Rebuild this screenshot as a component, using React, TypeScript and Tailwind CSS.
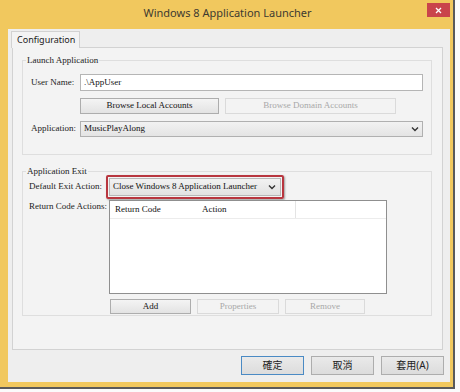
import React from "react";

const serif = { fontFamily: '"Liberation Serif", "Noto Sans CJK TC", serif' };
const sans = { fontFamily: '"Noto Sans", "Open Sans", sans-serif' };
const cjk = { fontFamily: '"Noto Sans", "Noto Sans CJK TC", sans-serif' };

function Chevron() {
  return (
    <svg width="8" height="6" viewBox="0 0 8 6" className="shrink-0">
      <path d="M1 1.5 L4 4.5 L7 1.5" fill="none" stroke="#333" strokeWidth="1.4" />
    </svg>
  );
}

function Btn({ children, disabled, w }: { children: React.ReactNode; disabled?: boolean; w: string }) {
  return (
    <div
      className={
        "h-full flex items-center justify-center border text-[9px] " +
        w +
        (disabled
          ? " border-[#dadada] bg-[#f3f3f3] text-[#a8a8a8]"
          : " border-[#adadad] bg-gradient-to-b from-[#f4f4f4] to-[#e3e3e3] text-[#111]")
      }
      style={serif}
    >
      {children}
    </div>
  );
}

export default function App() {
  return (
    <div className="w-[460px] h-[392px] bg-[#fbfbfb] overflow-hidden">
      <div className="w-[455px] h-[389px] bg-[#f1c85e] border-r-2 border-b-2 border-[#5a5a5a] flex flex-col">
        {/* Title bar */}
        <div className="h-[29px] relative flex items-center justify-center shrink-0">
          <span className="text-[11px] text-[#3e3a30] mt-[-3px] ml-[2px]" style={sans}>
            Windows 8 Application Launcher
          </span>
          <div className="absolute left-[427px] top-[3px] w-[23px] h-[14px] bg-[#c9444b] flex items-center justify-center">
            <svg width="7" height="7" viewBox="0 0 7 7">
              <path d="M1 1 L6 6 M6 1 L1 6" stroke="#fff" strokeWidth="1.3" />
            </svg>
          </div>
        </div>

        {/* Client area */}
        <div className="ml-[8px] w-[442px] h-[353px] bg-[#eeeeee] flex flex-col shrink-0">
          {/* Tab header */}
          <div className="h-[18px] relative shrink-0">
            <div
              className="absolute left-[3px] top-[2px] w-[69px] h-[17px] bg-[#f3f3f3] border border-b-0 border-[#d2d2d2] flex items-center pl-[5px] text-[9px] text-[#1a1a1a] z-10"
              style={sans}
            >
              Configuration
            </div>
          </div>
          {/* Tab page */}
          <div className="ml-[4px] w-[431px] h-[303px] border border-[#d2d2d2] bg-[#f3f3f3] pl-[9px] pt-[12px] flex flex-col shrink-0">
            {/* Launch Application group */}
            <div className="w-[410px] h-[95px] border border-[#dedede] flex flex-col pl-[8px] shrink-0">
              <div
                className="self-start -mt-[7px] -ml-[5px] px-[1px] h-[12px] bg-[#f3f3f3] text-[9px] leading-[12px] text-[#222] whitespace-nowrap"
                style={serif}
              >
                Launch Application
              </div>
              <div className="flex items-center h-[17px] mt-[8px]">
                <div className="w-[49px] text-[9px] text-[#222]" style={serif}>
                  User Name:
                </div>
                <div
                  className="w-[343px] h-full bg-white border border-[#b5b5b5] flex items-center pl-[3px] text-[9px] text-[#111]"
                  style={serif}
                >
                  .\AppUser
                </div>
              </div>
              <div className="flex h-[16px] mt-[7px] pl-[49px] gap-[6px]">
                <Btn w="w-[139px]">Browse Local Accounts</Btn>
                <Btn w="w-[171px]" disabled>
                  Browse Domain Accounts
                </Btn>
              </div>
              <div className="flex items-center h-[16px] mt-[7px]">
                <div className="w-[49px] text-[9px] text-[#222]" style={serif}>
                  Application:
                </div>
                <div
                  className="w-[343px] h-full bg-gradient-to-b from-[#f2f2f2] to-[#e4e4e4] border border-[#b0b0b0] flex items-center justify-between pl-[3px] pr-[3px] text-[9px] text-[#111]"
                  style={serif}
                >
                  <span>MusicPlayAlong</span>
                  <Chevron />
                </div>
              </div>
            </div>

            {/* Application Exit group */}
            <div className="w-[410px] h-[145px] mt-[16px] border border-[#dedede] flex flex-col pl-[6px] shrink-0">
              <div
                className="self-start -mt-[7px] -ml-[3px] px-[1px] h-[12px] bg-[#f3f3f3] text-[9px] leading-[12px] text-[#222] whitespace-nowrap"
                style={serif}
              >
                Application Exit
              </div>
              <div className="flex items-center h-[24px] -mt-[2px]">
                <div className="w-[77px] text-[9px] text-[#222]" style={serif}>
                  Default Exit Action:
                </div>
                <div className="w-[178px] h-full border-2 border-[#b8363f] rounded-[2px] shadow-[1px_1px_2px_rgba(0,0,0,0.35)] p-[1px]">
                  <div
                    className="w-full h-full bg-gradient-to-b from-[#f2f2f2] to-[#e2e2e2] border border-[#b8b8b8] flex items-center justify-between pl-[3px] pr-[4px] text-[9px] text-[#111]"
                    style={serif}
                  >
                    <span>Close Windows 8 Application Launcher</span>
                    <Chevron />
                  </div>
                </div>
              </div>
              <div className="flex mt-[1px]">
                <div className="w-[80px] text-[9px] text-[#222]" style={serif}>
                  Return Code Actions:
                </div>
                <div className="w-[278px] h-[94px] border border-[#8f8f8f] bg-white flex flex-col">
                  <div className="h-[18px] flex border-b border-[#ececec] text-[9px] text-[#111]" style={serif}>
                    <div className="w-[86px] flex items-center pl-[5px]">Return Code</div>
                    <div className="w-[100px] flex items-center pl-[6px] border-r border-[#e4e4e4]">Action</div>
                  </div>
                </div>
              </div>
              <div className="flex h-[15px] mt-[5px] ml-[81px] gap-[6px]">
                <Btn w="w-[81px]">Add</Btn>
                <Btn w="w-[82px]" disabled>
                  Properties
                </Btn>
                <Btn w="w-[80px]" disabled>
                  Remove
                </Btn>
              </div>
            </div>
          </div>

          {/* Dialog buttons */}
          <div className="flex justify-end gap-[7px] pr-[6px] mt-[6px] h-[19px]">
            <div
              className="w-[63px] h-full border border-[#4a8ac4] bg-gradient-to-b from-[#eaeaea] to-[#dcdcdc] flex items-center justify-center text-[10px] text-[#222]"
              style={cjk}
            >
              確定
            </div>
            <div
              className="w-[63px] h-full border border-[#adadad] bg-gradient-to-b from-[#eaeaea] to-[#dcdcdc] flex items-center justify-center text-[10px] text-[#222]"
              style={cjk}
            >
              取消
            </div>
            <div
              className="w-[63px] h-full border border-[#adadad] bg-gradient-to-b from-[#eaeaea] to-[#dcdcdc] flex items-center justify-center text-[10px] text-[#222]"
              style={cjk}
            >
              套用(A)
            </div>
          </div>
        </div>
      </div>
    </div>
  );
}
